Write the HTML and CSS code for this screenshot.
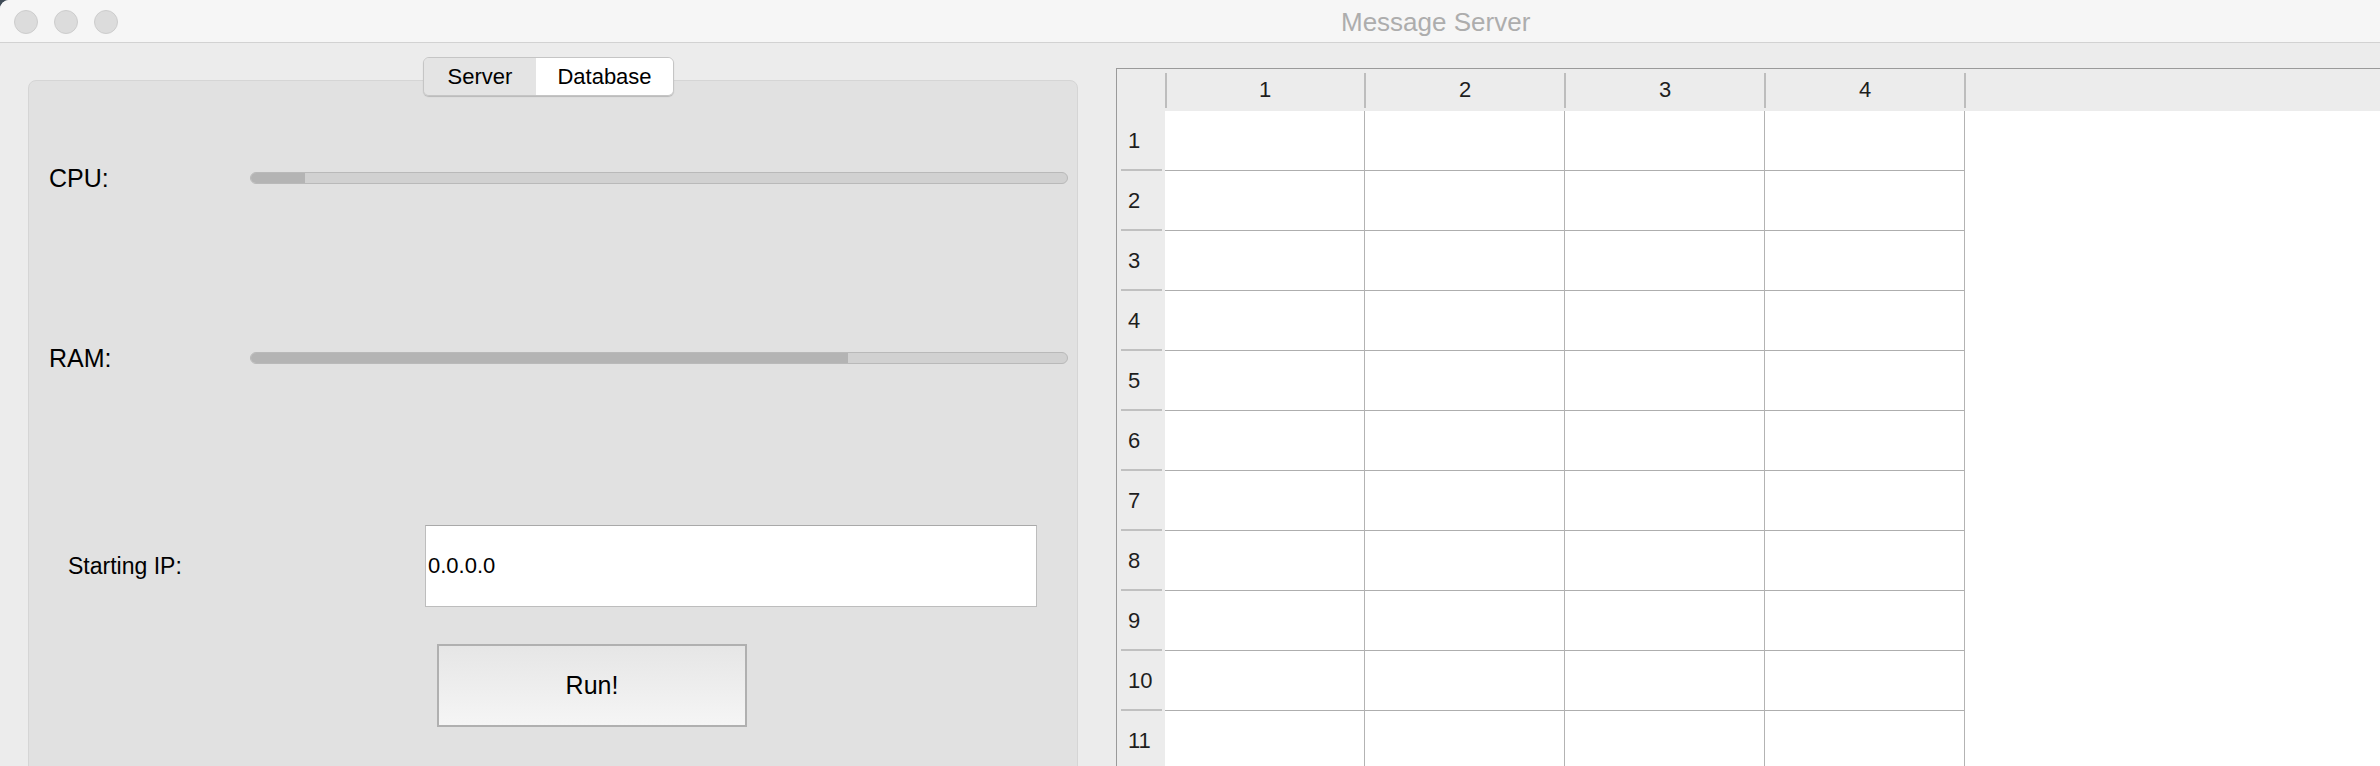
FILE: index.html
```html
<!DOCTYPE html>
<html>
<head>
<meta charset="utf-8">
<title>Message Server</title>
<link rel="stylesheet" href="styles.css">
</head>
<body>
<div class="window">
  <header class="titlebar">
    <div class="lights"><span class="light"></span><span class="light"></span><span class="light"></span></div>
    <div class="title">Message Server</div>
  </header>
  <main class="content">
    <section class="left">
      <div class="tabs">
        <div class="tab">Server</div>
        <div class="tab active">Database</div>
      </div>
      <div class="panel">
        <div class="meter-row">
          <span class="label">CPU:</span>
          <div class="bar"><div class="fill" style="width:6.6%"></div></div>
        </div>
        <div class="meter-row ram">
          <span class="label">RAM:</span>
          <div class="bar"><div class="fill" style="width:73.2%"></div></div>
        </div>
        <div class="ip-row">
          <span class="ip-label">Starting IP:</span>
          <input class="ip-input" type="text" value="0.0.0.0">
        </div>
        <div class="run-row">
          <button class="run">Run!</button>
        </div>
      </div>
    </section>
    <section class="grid">
      <div class="thead">
        <div class="corner"></div>
        <div class="th">1</div>
        <div class="th">2</div>
        <div class="th">3</div>
        <div class="th">4</div>
      </div>
      <div class="row"><div class="rh">1</div><div class="td"></div><div class="td"></div><div class="td"></div><div class="td"></div></div>
      <div class="row"><div class="rh">2</div><div class="td"></div><div class="td"></div><div class="td"></div><div class="td"></div></div>
      <div class="row"><div class="rh">3</div><div class="td"></div><div class="td"></div><div class="td"></div><div class="td"></div></div>
      <div class="row"><div class="rh">4</div><div class="td"></div><div class="td"></div><div class="td"></div><div class="td"></div></div>
      <div class="row"><div class="rh">5</div><div class="td"></div><div class="td"></div><div class="td"></div><div class="td"></div></div>
      <div class="row"><div class="rh">6</div><div class="td"></div><div class="td"></div><div class="td"></div><div class="td"></div></div>
      <div class="row"><div class="rh">7</div><div class="td"></div><div class="td"></div><div class="td"></div><div class="td"></div></div>
      <div class="row"><div class="rh">8</div><div class="td"></div><div class="td"></div><div class="td"></div><div class="td"></div></div>
      <div class="row"><div class="rh">9</div><div class="td"></div><div class="td"></div><div class="td"></div><div class="td"></div></div>
      <div class="row"><div class="rh">10</div><div class="td"></div><div class="td"></div><div class="td"></div><div class="td"></div></div>
      <div class="row"><div class="rh">11</div><div class="td"></div><div class="td"></div><div class="td"></div><div class="td"></div></div>
      <div class="row"><div class="rh">12</div><div class="td"></div><div class="td"></div><div class="td"></div><div class="td"></div></div>
    </section>
  </main>
</div>
</body>
</html>
```
FILE: styles.css
```css
html, body {
  margin: 0;
  padding: 0;
  height: 766px;
  overflow: hidden;
  background: #3f4b57;
}

.window {
  width: 2380px;
  height: 766px;
  background: #ececec;
  border-top-left-radius: 9px;
  overflow: hidden;
  font-family: "Liberation Sans", Arial, sans-serif;
  color: #000;
}

.titlebar {
  height: 42px;
  border-bottom: 1px solid #d2d2d2;
  background: #f6f6f6;
  display: flex;
  align-items: center;
  padding-left: 14px;
}

.lights {
  display: flex;
  gap: 16px;
  margin-top: 2px;
}

.light {
  width: 22px;
  height: 22px;
  border-radius: 50%;
  background: #dcdcdc;
  border: 1px solid #cdcdcd;
}

.title {
  margin-left: 1223px;
  font-size: 26px;
  color: #adadad;
  margin-top: 2px;
}

.content {
  display: flex;
  height: 723px;
  overflow: hidden;
}

.left {
  margin-left: 28px;
  width: 1050px;
  flex: none;
  display: flex;
  flex-direction: column;
}

.tabs {
  flex: none;
  align-self: center;
  margin-top: 14px;
  margin-left: -9px;
  display: flex;
  border: 1px solid #c5c5c5;
  border-radius: 6px;
  overflow: hidden;
  box-shadow: 0 1px 1px rgba(0, 0, 0, 0.18);
  position: relative;
  z-index: 1;
}

.tab {
  width: 112px;
  height: 37px;
  display: flex;
  align-items: center;
  justify-content: center;
  font-size: 22px;
  background: #e4e4e4;
}

.tab.active {
  width: 137px;
  background: #ffffff;
}

.panel {
  flex: none;
  margin-top: -16px;
  height: 800px;
  box-sizing: border-box;
  background: #e1e1e1;
  border: 1px solid #d5d5d5;
  border-radius: 8px;
  padding: 77px 9px 0 20px;
}

.meter-row {
  display: flex;
  align-items: center;
  height: 40px;
}

.meter-row.ram {
  margin-top: 140px;
}

.label {
  width: 201px;
  flex: none;
  font-size: 25px;
}

.bar {
  flex: 1;
  height: 12px;
  box-sizing: border-box;
  border: 1px solid #b9b9b9;
  border-radius: 6px;
  background: #d1d1d1;
  overflow: hidden;
}

.fill {
  height: 100%;
  background: #b4b4b4;
}

.ip-row {
  margin-top: 147px;
  display: flex;
  align-items: center;
  height: 82px;
}

.ip-label {
  width: 357px;
  padding-left: 19px;
  flex: none;
  font-size: 23px;
}

.ip-input {
  width: 612px;
  height: 82px;
  box-sizing: border-box;
  margin: 0;
  padding: 0 0 0 2px;
  border: 1px solid #bdbdbd;
  border-top-color: #a9a9a9;
  border-radius: 0;
  background: #ffffff;
  font-family: "Liberation Sans", Arial, sans-serif;
  font-size: 22px;
  color: #000;
  outline: none;
}

.run-row {
  margin-top: 37px;
  padding-left: 388px;
}

.run {
  display: block;
  width: 310px;
  height: 83px;
  margin: 0;
  padding: 0;
  border: 2px solid #b0b0b0;
  border-radius: 0;
  background: linear-gradient(#e6e6e6, #f5f5f5);
  font-family: "Liberation Sans", Arial, sans-serif;
  font-size: 25px;
  color: #000;
}

.grid {
  flex: 1;
  margin-left: 38px;
  margin-top: 25px;
  border-top: 1px solid #9a9a9a;
  border-left: 1px solid #9a9a9a;
  background: #ffffff;
  overflow: hidden;
}

.thead {
  display: flex;
  height: 42px;
  background: #ececec;
}

.corner {
  width: 48px;
  flex: none;
  position: relative;
}

.corner::after {
  content: "";
  position: absolute;
  right: -2px;
  top: 4px;
  bottom: 3px;
  width: 2px;
  background: #bdbdbd;
  z-index: 1;
}

.th {
  width: 200px;
  flex: none;
  box-sizing: border-box;
  display: flex;
  align-items: center;
  justify-content: center;
  font-size: 22px;
  color: #1e1e1e;
  position: relative;
}

.th::after {
  content: "";
  position: absolute;
  right: -1px;
  top: 4px;
  bottom: 3px;
  width: 2px;
  background: #bdbdbd;
  z-index: 1;
}

.row {
  display: flex;
  height: 60px;
}

.rh {
  width: 48px;
  flex: none;
  box-sizing: border-box;
  background: #ececec;
  padding-left: 11px;
  display: flex;
  align-items: center;
  font-size: 22px;
  color: #1e1e1e;
  position: relative;
}

.rh::after {
  content: "";
  position: absolute;
  left: 4px;
  right: 3px;
  bottom: 0;
  height: 2px;
  background: #c0c0c0;
}

.td {
  width: 200px;
  flex: none;
  box-sizing: border-box;
  border-right: 1px solid #b3b3b3;
  border-bottom: 1px solid #aeaeae;
}
```
